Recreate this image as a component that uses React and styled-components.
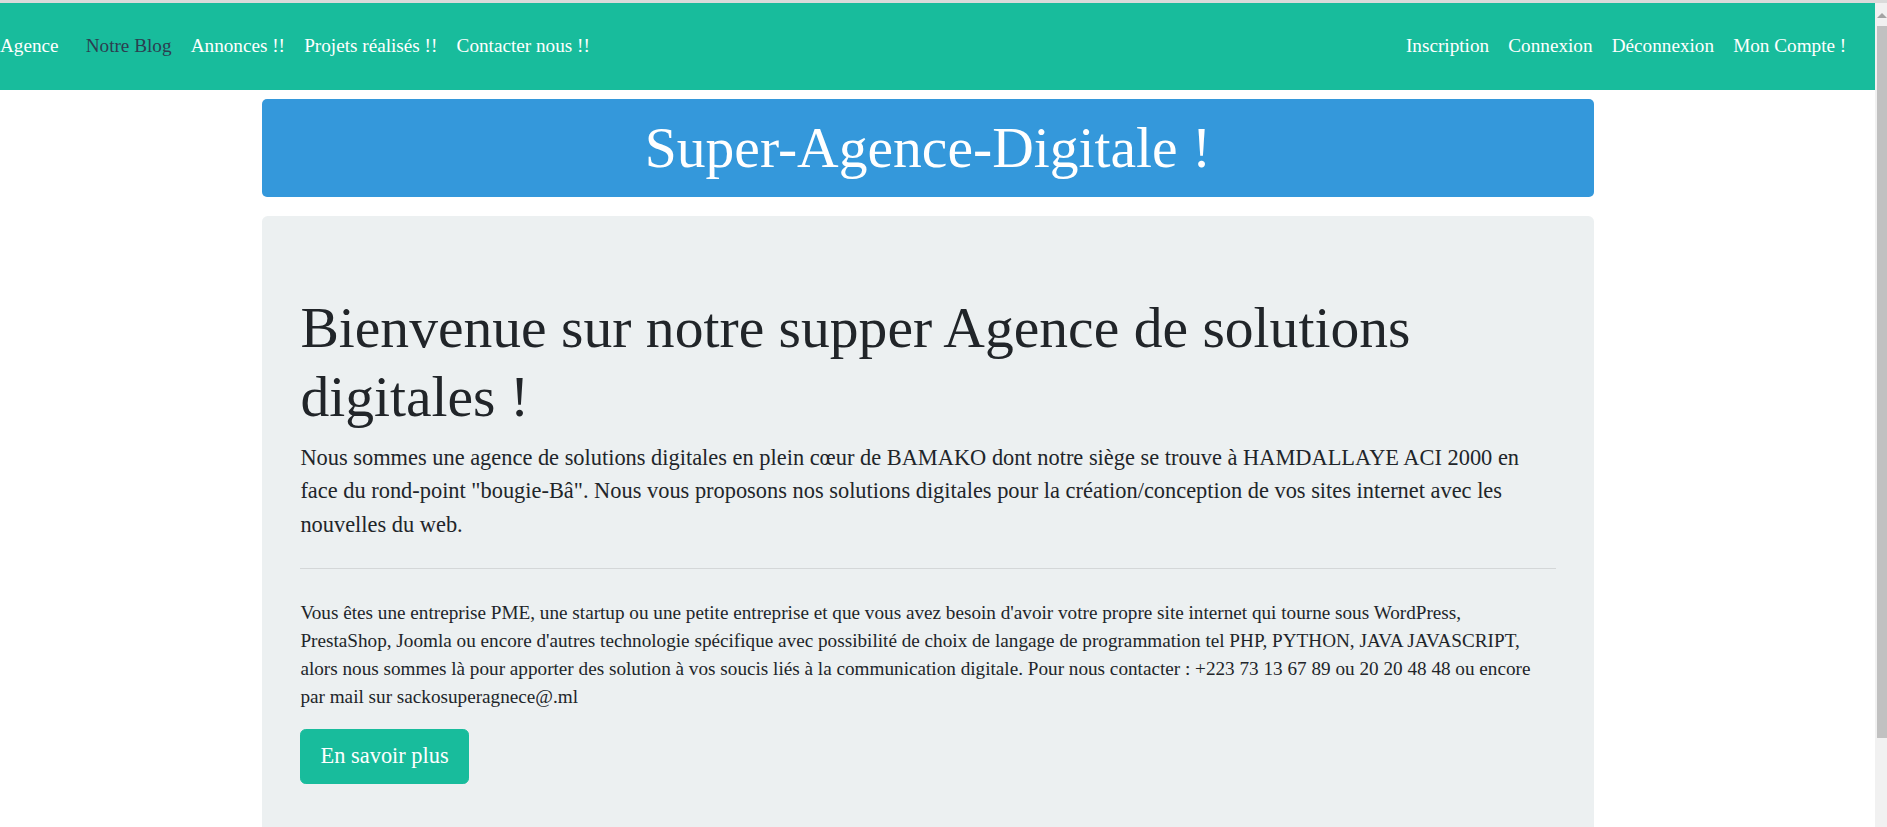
import React from 'react';
import styled, { createGlobalStyle } from 'styled-components';

const GlobalStyle = createGlobalStyle`
  html, body {
    margin: 0;
    padding: 0;
    overflow: hidden;
    background: #fff;
  }
  body {
    font-family: "Liberation Serif", "Times New Roman", serif;
    color: #212529;
  }
`;

const Screen = styled.div`
  height: 827px;
  display: flex;
  flex-direction: column;
`;

const TopEdge = styled.div`
  height: 3px;
  flex-shrink: 0;
  background: #dadada;
`;

const Viewport = styled.div`
  flex: 1;
  display: flex;
  min-height: 0;
`;

const Page = styled.div`
  flex: 1;
  display: flex;
  flex-direction: column;
  overflow: hidden;
`;

const ScrollRail = styled.div`
  width: 12px;
  flex-shrink: 0;
  display: flex;
  flex-direction: column;
  align-items: flex-end;
  background: #f1f1f1;
`;

const RailArrow = styled.div`
  width: 0;
  height: 0;
  margin: 10px 0 8px;
  border-left: 5px solid transparent;
  border-right: 5px solid transparent;
  border-bottom: 5px solid #a3a3a3;
`;

const RailThumb = styled.div`
  width: 10px;
  height: 712px;
  background: #c1c1c1;
`;

const Navbar = styled.nav`
  height: 87px;
  flex-shrink: 0;
  display: flex;
  align-items: center;
  padding: 0 19.2px 0 0;
  background: #18bc9c;
  font-size: 19.2px;
  line-height: 28.8px;
`;

const Brand = styled.a`
  color: #fff;
  margin-right: 17.5px;
  text-decoration: none;
`;

const NavList = styled.ul`
  display: flex;
  list-style: none;
  margin: 0;
  padding: 0;
  margin-left: ${(p) => (p.$end ? 'auto' : '0')};
`;

const NavLink = styled.a`
  display: block;
  padding: 0 9.6px;
  color: ${(p) => (p.$active ? '#2c3e50' : '#fff')};
  text-decoration: none;
  white-space: nowrap;
`;

const Container = styled.main`
  width: 1332px;
  margin: 9px 0 0 262px;
  flex: 1;
  display: flex;
  flex-direction: column;
`;

const TitleBox = styled.header`
  background: #3498db;
  border-radius: 5px;
  padding: 14.4px 0;
  margin-bottom: 19px;
  text-align: center;
`;

const SiteTitle = styled.h1`
  margin: 0;
  font-size: 57.6px;
  line-height: 69.12px;
  font-weight: 400;
  color: #fff;
`;

const Jumbotron = styled.section`
  flex: 1;
  background: #ecf0f1;
  border-radius: 5.76px 5.76px 0 0;
  padding: 76.8px 38.4px;
`;

const Display = styled.h2`
  margin: 0 0 9.6px;
  font-size: 57.6px;
  line-height: 69.12px;
  font-weight: 300;
  color: #212529;
`;

const Lead = styled.p`
  margin: 0;
  font-size: 22.4px;
  line-height: 33.6px;
  font-weight: 300;
`;

const Divider = styled.hr`
  border: 0;
  border-top: 1px solid rgba(0, 0, 0, 0.1);
  margin: 26.4px 0 30px;
`;

const Text = styled.p`
  margin: 0 0 18px;
  font-size: 19.2px;
  line-height: 28px;
`;

const Button = styled.a`
  display: inline-block;
  padding: 9.6px 19.2px;
  font-size: 22.4px;
  line-height: 33.6px;
  color: #fff;
  background: #18bc9c;
  border: 1px solid #18bc9c;
  border-radius: 5.76px;
  text-decoration: none;
`;

const leftLinks = [
  { label: 'Notre Blog', active: true },
  { label: 'Annonces !!' },
  { label: 'Projets réalisés !!' },
  { label: 'Contacter nous !!' },
];

const rightLinks = ['Inscription', 'Connexion', 'Déconnexion', 'Mon Compte !'];

export default function App() {
  return (
    <>
      <GlobalStyle />
      <Screen>
        <TopEdge />
        <Viewport>
          <Page>
            <Navbar>
              <Brand href="#">Agence</Brand>
              <NavList>
                {leftLinks.map((l) => (
                  <li key={l.label}>
                    <NavLink href="#" $active={l.active}>{l.label}</NavLink>
                  </li>
                ))}
              </NavList>
              <NavList $end>
                {rightLinks.map((l) => (
                  <li key={l}>
                    <NavLink href="#">{l}</NavLink>
                  </li>
                ))}
              </NavList>
            </Navbar>

            <Container>
              <TitleBox>
                <SiteTitle>Super-Agence-Digitale !</SiteTitle>
              </TitleBox>

              <Jumbotron>
                <Display>Bienvenue sur notre supper Agence de solutions digitales !</Display>
                <Lead>
                  Nous sommes une agence de solutions digitales en plein cœur de BAMAKO dont notre siège se
                  trouve à HAMDALLAYE ACI 2000 en face du rond-point "bougie-Bâ". Nous vous proposons nos
                  solutions digitales pour la création/conception de vos sites internet avec les nouvelles du web.
                </Lead>
                <Divider />
                <Text>
                  Vous êtes une entreprise PME, une startup ou une petite entreprise et que vous avez besoin
                  d'avoir votre propre site internet qui tourne sous WordPress, PrestaShop, Joomla ou encore
                  d'autres technologie spécifique avec possibilité de choix de langage de programmation tel PHP,
                  PYTHON, JAVA JAVASCRIPT, alors nous sommes là pour apporter des solution à vos soucis liés à
                  la communication digitale. Pour nous contacter : +223 73 13 67 89 ou 20 20 48 48 ou encore
                  par mail sur sackosuperagnece@.ml
                </Text>
                <Button href="#">En savoir plus</Button>
              </Jumbotron>
            </Container>
          </Page>
          <ScrollRail>
            <RailArrow />
            <RailThumb />
          </ScrollRail>
        </Viewport>
      </Screen>
    </>
  );
}
